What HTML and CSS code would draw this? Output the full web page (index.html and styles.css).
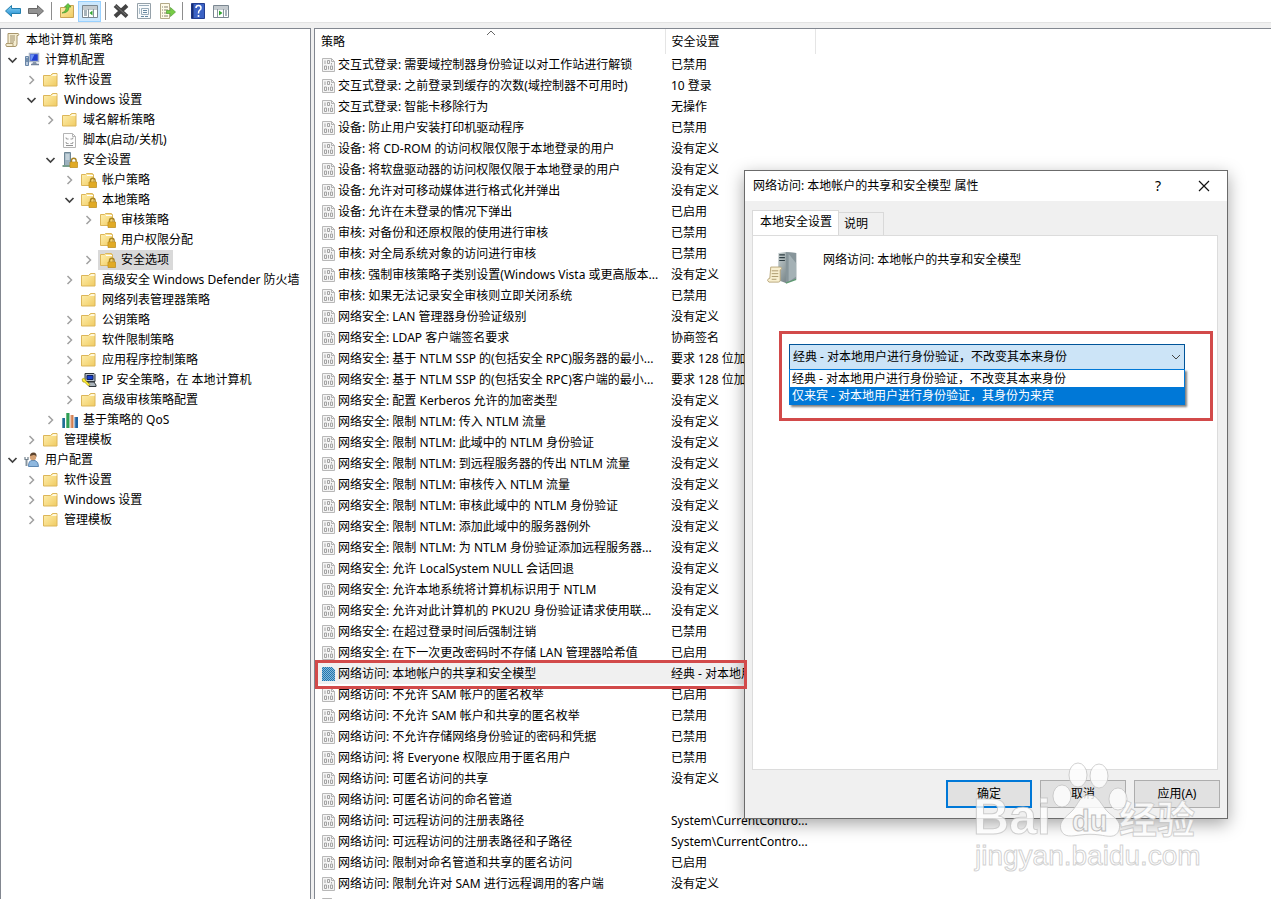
FILE: index.html
```html
<!DOCTYPE html>
<html lang="zh-CN">
<head>
<meta charset="utf-8">
<title>本地组策略编辑器</title>
<link rel="stylesheet" href="styles.css">
</head>
<body>
<svg class="defs" aria-hidden="true">
  <defs>
    <linearGradient id="gold" x1="0" y1="0" x2="1" y2="1"><stop offset="0" stop-color="#fff0b0"/><stop offset="1" stop-color="#f0cb62"/></linearGradient>
    <linearGradient id="blue" x1="0" y1="0" x2="0" y2="1"><stop offset="0" stop-color="#8ed4f5"/><stop offset="1" stop-color="#1a8ad0"/></linearGradient>
    <linearGradient id="steel" x1="0" y1="0" x2="1" y2="1"><stop offset="0" stop-color="#c9d2d2"/><stop offset="1" stop-color="#56656a"/></linearGradient>
    <pattern id="dots" width="2" height="2" patternUnits="userSpaceOnUse"><path d="M0 0h1v1h1v1H1V1H0z" fill="#2076b0"/></pattern>
    <symbol id="open" viewBox="0 0 16 16"><path d="M4.500 6l4 4 4-4" fill="none" stroke="#404040" stroke-width="1.700"/></symbol>
    <symbol id="closed" viewBox="0 0 16 16"><path d="M6.500 4l4 4-4 4" fill="none" stroke="#a0a0a0" stroke-width="1.500"/></symbol>
    <symbol id="folder" viewBox="0 0 16 16"><path d="M.5 3.500h7l2-2h4.500v12.500H.500z" fill="url(#gold)" stroke="#dcb65a"/><path d="M8.500 3.500h5M10 2.500h3.500" stroke="#fff8dc"/></symbol>
    <symbol id="lock" viewBox="0 0 16 16"><path d="M9.500 10V8.500a2.300 2.300 0 0 1 4.600 0V10" fill="none" stroke="#a98524" stroke-width="1.400"/><path d="M8 10h7.500v5.500H8z" fill="#edb52a" stroke="#b88616" stroke-width=".7"/><path d="M8.500 12h6.500M8.500 14h6.500" stroke="#c6911b" stroke-width=".6"/></symbol>
    <symbol id="folderlock" viewBox="0 0 16 16"><path d="M.5 2.500h4l1-1h6v1h1v11H.5z" fill="url(#gold)" stroke="#dcb65a"/><path d="M6 3.500h6" stroke="#fff"/><use href="#lock" width="16" height="16"/></symbol>
    <symbol id="scroll" viewBox="0 0 16 16"><path d="M3 1.500h10c1 0 1 2 0 2h-1v8.500q0 2.500-2 2.500H1.500q-1.500-2 0-3H3z" fill="#f5edd0" stroke="#a8966c"/><path d="M5 4h5M5 6h5M5 8h5M5 10h4" stroke="#968662" stroke-width=".9"/><path d="M1 11.500h7v3" fill="none" stroke="#b09e73"/></symbol>
    <symbol id="computer" viewBox="0 0 16 16"><path d="M5.500 1.500h9v8h-9z" fill="#1f3ed0" stroke="#a9b5c7" stroke-width="1.500"/><path d="M6.500 2.500h4l-3 6h-1z" fill="#6b91f4"/><path d="M9 10h3l1 2.500H8z" fill="#8998ad"/><path d="M7 12.500h8" stroke="#73839b" stroke-width="1.500"/><path d="M1.500 4.500h3v9h-3z" fill="#b8c8dc" stroke="#6986a8"/><path d="M2 7h2M2 9h2" stroke="#315880"/></symbol>
    <symbol id="script" viewBox="0 0 16 16"><path d="M1.500 1.500h9l3 3v11h-12z" fill="#fdfdfd" stroke="#b4b4b4"/><path d="M10.500 1.500v3h3" fill="none" stroke="#b4b4b4"/><path d="M4 5.500q0 2 1.500 1.500h1M11 5.500q0 2-1.500 1.500h-1M4 10q0 2 1.500 1.500h1M11 10q0 2-1.500 1.500h-1M4 13.500h7" stroke="#858585" stroke-width=".9" fill="none"/></symbol>
    <symbol id="serverlock" viewBox="0 0 16 16"><path d="M2.500.5h6v13h-6z" fill="#9cb1be" stroke="#6f8795"/><path d="M3.500 3h4M3.500 5h4M3.500 7h4" stroke="#e9f1f5"/><path d="M.5 14h8" stroke="#779d8c" stroke-width="2"/><use href="#lock" width="16" height="16"/></symbol>
    <symbol id="ipsec" viewBox="0 0 16 16"><path d="M4 1.500h9l1 1v7H4z" fill="#b5bec7" stroke="#30363b"/><path d="M6 3.500h6v4H6z" fill="#1440d0" stroke="#102060"/><path d="M7 10h6l2 3v1.500H8z" fill="#aab3bb" stroke="#30363b"/><path d="M1 7.500a2 2 0 0 1 3-.5l1 2 4 3.500-1.500 1.500L3.500 10H2z" fill="#ffef35" stroke="#9c8b10" stroke-width=".7"/></symbol>
    <symbol id="bars" viewBox="0 0 16 16"><path d="M0 6h3v10H0z" fill="#1f6f96"/><path d="M4 1h3.500v15H4z" fill="#2f9f54"/><path d="M8.500 3h3v13h-3z" fill="#d37f50"/><path d="M12.500 5H16v11h-3.500z" fill="#1e63a2"/><path d="M.5 6v10M4.500 1v15M9 3v13M13 5v11" stroke="#fff" opacity=".3"/></symbol>
    <symbol id="user" viewBox="0 0 16 16"><path d="M4.500 14.500q0-6 3.500-6h3q3.500 1 3.500 6z" fill="#8fb8df" stroke="#5d87b2"/><circle cx="9" cy="5" r="3.200" fill="#d5a274"/><path d="M6 4q0-3.500 3.500-3.500T12.500 5q-1-2.500-3-2z" fill="#5c432d"/><path d="M2.500 7v7" stroke="#87949f" stroke-width="2"/><path d="M1 5v2.500h3V5" fill="none" stroke="#71808c" stroke-width="1.200"/></symbol>
    <symbol id="binary" viewBox="0 0 14 16"><path d="M.5 1.500h9l3 3v10H.5z" fill="#f4f4f4" stroke="#b8b8b8"/><path d="M9.500 1.500v3h3" fill="none" stroke="#b2b2b2"/><path d="M3 3.500v3.500M5.500 3.500h2v3h-2zM2.500 9h2v3.500h-2zM6.500 9v3.500M8.500 9h2v3.500h-2zM9.500 6v1.500" fill="none" stroke="#9b9b9b" stroke-width=".9"/></symbol>
    <symbol id="binarysel" viewBox="0 0 14 16"><path d="M0 1h10l3 3v11H0z" fill="#86b9d8"/><path d="M0 1h10l3 3v11H0z" fill="url(#dots)"/></symbol>
  </defs>
</svg>

<div class="app">
  <nav class="toolbar" aria-label="工具栏">
    <button aria-label="后退"><svg viewBox="0 0 18 18"><path d="M1.500 9l6-5.500v3h9v5h-9v3z" fill="url(#blue)" stroke="#247fae"/></svg></button>
    <button aria-label="前进"><svg viewBox="0 0 18 18"><path d="M16.500 9l-6-5.500v3h-9v5h9v3z" fill="#929292" stroke="#676767"/></svg></button>
    <span class="sep"></span>
    <button aria-label="向上"><svg viewBox="0 0 18 18"><path d="M2.500 5.500h5l2-2h6v12h-13z" fill="url(#gold)" stroke="#c9a455"/><path d="M4 11q4-1 4.500-6H6.500L10 1.500 13 5h-2q0 6-7 6z" fill="#63c73d" stroke="#48952f" stroke-width=".7"/></svg></button>
    <button class="on" aria-label="显示控制台树"><svg viewBox="0 0 18 18"><path d="M1.500 3.500h15v12h-15z" fill="#fff" stroke="#7b8791"/><path d="M2 5h14M1.500 7h15M7.500 7v8M12.500 7v8" stroke="#8a969f"/><path d="M3 9h3M3 11h3M3 13h3" stroke="#526b7b"/><path d="M11.500 8.500v5l-3-2.500z" fill="#34a634"/></svg></button>
    <span class="sep"></span>
    <button aria-label="删除"><svg viewBox="0 0 18 18"><path d="M3 3.500l12 11M15 3.500l-12 11" stroke="#444" stroke-width="4"/><path d="M3 3l11 10" stroke="#777"/></svg></button>
    <button aria-label="属性"><svg viewBox="0 0 18 18"><path d="M2.500 1.500h13v15h-13z" fill="#f9fbfc" stroke="#95a1a9"/><path d="M4 3.500h10M6.500 6.500h7v6h-7z" fill="none" stroke="#9badba"/><path d="M4 7h1M4 9h1M4 11h1M8 8.500h4M8 10.500h4M6 14.500h3M10 14.500h3" stroke="#6788a0"/></svg></button>
    <button aria-label="导出列表"><svg viewBox="0 0 18 18"><path d="M2.500 1.500h9v15h-9z" fill="#fffbe8" stroke="#b4aa88"/><path d="M4 5h1M4 8h1M4 11h1M4 14h1M6 5h4M6 8h4M6 11h4M6 14h4" stroke="#86816f"/><path d="M8.500 8.500h4v-3l5 4.500-5 4.500v-3h-4z" fill="#76cc45" stroke="#539d34" stroke-width=".7"/></svg></button>
    <span class="sep"></span>
    <button aria-label="帮助"><svg viewBox="0 0 18 18"><path d="M2.500 1.500h13v15h-13z" fill="#3b62c4" stroke="#233e91"/><path d="M3.500 2v14" stroke="#182d72" stroke-width="2"/><path d="M7 6q0-2.500 2.500-2.500T12 6q0 1.500-1.300 2.200T9.500 11.500" fill="none" stroke="#fff" stroke-width="1.500"/><circle cx="9.500" cy="14" r="1" fill="#fff"/></svg></button>
    <button aria-label="显示操作窗格"><svg viewBox="0 0 18 18"><path d="M1.500 3.500h15v12h-15z" fill="#fff" stroke="#7b8791"/><path d="M2 5h14M1.500 7h15M5.500 7v8M11.500 7v8" stroke="#8a969f"/><path d="M13 9h2M13 11h2M13 13h2" stroke="#526b7b"/><path d="M7 8.500v5l3.500-2.500z" fill="#34a634"/></svg></button>
  </nav>

  <div class="panes">
    <aside class="tree">
      <div class="node root"><svg class="ico"><use href="#scroll"/></svg><span>本地计算机 策略</span></div>
      <ul>
        <li><div class="node"><svg class="tw"><use href="#open"/></svg><svg class="ico"><use href="#computer"/></svg><span>计算机配置</span></div>
          <ul>
            <li><div class="node"><svg class="tw"><use href="#closed"/></svg><svg class="ico"><use href="#folder"/></svg><span>软件设置</span></div></li>
            <li><div class="node"><svg class="tw"><use href="#open"/></svg><svg class="ico"><use href="#folder"/></svg><span>Windows 设置</span></div>
              <ul>
                <li><div class="node"><svg class="tw"><use href="#closed"/></svg><svg class="ico"><use href="#folder"/></svg><span>域名解析策略</span></div></li>
                <li><div class="node"><i class="tw"></i><svg class="ico"><use href="#script"/></svg><span>脚本(启动/关机)</span></div></li>
                <li><div class="node"><svg class="tw"><use href="#open"/></svg><svg class="ico"><use href="#serverlock"/></svg><span>安全设置</span></div>
                  <ul>
                    <li><div class="node"><svg class="tw"><use href="#closed"/></svg><svg class="ico"><use href="#folderlock"/></svg><span>帐户策略</span></div></li>
                    <li><div class="node"><svg class="tw"><use href="#open"/></svg><svg class="ico"><use href="#folderlock"/></svg><span>本地策略</span></div>
                      <ul>
                        <li><div class="node"><svg class="tw"><use href="#closed"/></svg><svg class="ico"><use href="#folderlock"/></svg><span>审核策略</span></div></li>
                        <li><div class="node"><i class="tw"></i><svg class="ico"><use href="#folderlock"/></svg><span>用户权限分配</span></div></li>
                        <li><div class="node current"><svg class="tw"><use href="#closed"/></svg><svg class="ico"><use href="#folderlock"/></svg><span>安全选项</span></div></li>
                      </ul>
                    </li>
                    <li><div class="node"><svg class="tw"><use href="#closed"/></svg><svg class="ico"><use href="#folder"/></svg><span>高级安全 Windows Defender 防火墙</span></div></li>
                    <li><div class="node"><i class="tw"></i><svg class="ico"><use href="#folder"/></svg><span>网络列表管理器策略</span></div></li>
                    <li><div class="node"><svg class="tw"><use href="#closed"/></svg><svg class="ico"><use href="#folder"/></svg><span>公钥策略</span></div></li>
                    <li><div class="node"><svg class="tw"><use href="#closed"/></svg><svg class="ico"><use href="#folder"/></svg><span>软件限制策略</span></div></li>
                    <li><div class="node"><svg class="tw"><use href="#closed"/></svg><svg class="ico"><use href="#folder"/></svg><span>应用程序控制策略</span></div></li>
                    <li><div class="node"><svg class="tw"><use href="#closed"/></svg><svg class="ico"><use href="#ipsec"/></svg><span>IP 安全策略，在 本地计算机</span></div></li>
                    <li><div class="node"><svg class="tw"><use href="#closed"/></svg><svg class="ico"><use href="#folder"/></svg><span>高级审核策略配置</span></div></li>
                  </ul>
                </li>
                <li><div class="node"><svg class="tw"><use href="#closed"/></svg><svg class="ico"><use href="#bars"/></svg><span>基于策略的 QoS</span></div></li>
              </ul>
            </li>
            <li><div class="node"><svg class="tw"><use href="#closed"/></svg><svg class="ico"><use href="#folder"/></svg><span>管理模板</span></div></li>
          </ul>
        </li>
        <li><div class="node"><svg class="tw"><use href="#open"/></svg><svg class="ico"><use href="#user"/></svg><span>用户配置</span></div>
          <ul>
            <li><div class="node"><svg class="tw"><use href="#closed"/></svg><svg class="ico"><use href="#folder"/></svg><span>软件设置</span></div></li>
            <li><div class="node"><svg class="tw"><use href="#closed"/></svg><svg class="ico"><use href="#folder"/></svg><span>Windows 设置</span></div></li>
            <li><div class="node"><svg class="tw"><use href="#closed"/></svg><svg class="ico"><use href="#folder"/></svg><span>管理模板</span></div></li>
          </ul>
        </li>
      </ul>
    </aside>

    <main class="list">
      <table>
        <colgroup><col class="c1"><col class="c2"><col></colgroup>
        <thead><tr><th>策略<svg class="sort" viewBox="0 0 10 6"><path d="M1 5l4-4 4 4" fill="none" stroke="#666"/></svg></th><th>安全设置</th><th class="rest"></th></tr></thead>
        <tbody>
          <tr><td><svg><use href="#binary"/></svg>交互式登录: 需要域控制器身份验证以对工作站进行解锁</td><td>已禁用</td></tr>
          <tr><td><svg><use href="#binary"/></svg>交互式登录: 之前登录到缓存的次数(域控制器不可用时)</td><td>10 登录</td></tr>
          <tr><td><svg><use href="#binary"/></svg>交互式登录: 智能卡移除行为</td><td>无操作</td></tr>
          <tr><td><svg><use href="#binary"/></svg>设备: 防止用户安装打印机驱动程序</td><td>已禁用</td></tr>
          <tr><td><svg><use href="#binary"/></svg>设备: 将 CD-ROM 的访问权限仅限于本地登录的用户</td><td>没有定义</td></tr>
          <tr><td><svg><use href="#binary"/></svg>设备: 将软盘驱动器的访问权限仅限于本地登录的用户</td><td>没有定义</td></tr>
          <tr><td><svg><use href="#binary"/></svg>设备: 允许对可移动媒体进行格式化并弹出</td><td>没有定义</td></tr>
          <tr><td><svg><use href="#binary"/></svg>设备: 允许在未登录的情况下弹出</td><td>已启用</td></tr>
          <tr><td><svg><use href="#binary"/></svg>审核: 对备份和还原权限的使用进行审核</td><td>已禁用</td></tr>
          <tr><td><svg><use href="#binary"/></svg>审核: 对全局系统对象的访问进行审核</td><td>已禁用</td></tr>
          <tr><td><svg><use href="#binary"/></svg>审核: 强制审核策略子类别设置(Windows Vista 或更高版本...</td><td>没有定义</td></tr>
          <tr><td><svg><use href="#binary"/></svg>审核: 如果无法记录安全审核则立即关闭系统</td><td>已禁用</td></tr>
          <tr><td><svg><use href="#binary"/></svg>网络安全: LAN 管理器身份验证级别</td><td>没有定义</td></tr>
          <tr><td><svg><use href="#binary"/></svg>网络安全: LDAP 客户端签名要求</td><td>协商签名</td></tr>
          <tr><td><svg><use href="#binary"/></svg>网络安全: 基于 NTLM SSP 的(包括安全 RPC)服务器的最小...</td><td>要求 128 位加密</td></tr>
          <tr><td><svg><use href="#binary"/></svg>网络安全: 基于 NTLM SSP 的(包括安全 RPC)客户端的最小...</td><td>要求 128 位加密</td></tr>
          <tr><td><svg><use href="#binary"/></svg>网络安全: 配置 Kerberos 允许的加密类型</td><td>没有定义</td></tr>
          <tr><td><svg><use href="#binary"/></svg>网络安全: 限制 NTLM: 传入 NTLM 流量</td><td>没有定义</td></tr>
          <tr><td><svg><use href="#binary"/></svg>网络安全: 限制 NTLM: 此域中的 NTLM 身份验证</td><td>没有定义</td></tr>
          <tr><td><svg><use href="#binary"/></svg>网络安全: 限制 NTLM: 到远程服务器的传出 NTLM 流量</td><td>没有定义</td></tr>
          <tr><td><svg><use href="#binary"/></svg>网络安全: 限制 NTLM: 审核传入 NTLM 流量</td><td>没有定义</td></tr>
          <tr><td><svg><use href="#binary"/></svg>网络安全: 限制 NTLM: 审核此域中的 NTLM 身份验证</td><td>没有定义</td></tr>
          <tr><td><svg><use href="#binary"/></svg>网络安全: 限制 NTLM: 添加此域中的服务器例外</td><td>没有定义</td></tr>
          <tr><td><svg><use href="#binary"/></svg>网络安全: 限制 NTLM: 为 NTLM 身份验证添加远程服务器...</td><td>没有定义</td></tr>
          <tr><td><svg><use href="#binary"/></svg>网络安全: 允许 LocalSystem NULL 会话回退</td><td>没有定义</td></tr>
          <tr><td><svg><use href="#binary"/></svg>网络安全: 允许本地系统将计算机标识用于 NTLM</td><td>没有定义</td></tr>
          <tr><td><svg><use href="#binary"/></svg>网络安全: 允许对此计算机的 PKU2U 身份验证请求使用联...</td><td>没有定义</td></tr>
          <tr><td><svg><use href="#binary"/></svg>网络安全: 在超过登录时间后强制注销</td><td>已禁用</td></tr>
          <tr><td><svg><use href="#binary"/></svg>网络安全: 在下一次更改密码时不存储 LAN 管理器哈希值</td><td>已启用</td></tr>
          <tr class="picked"><td><svg><use href="#binarysel"/></svg>网络访问: 本地帐户的共享和安全模型</td><td>经典 - 对本地用户...</td></tr>
          <tr><td><svg><use href="#binary"/></svg>网络访问: 不允许 SAM 帐户的匿名枚举</td><td>已启用</td></tr>
          <tr><td><svg><use href="#binary"/></svg>网络访问: 不允许 SAM 帐户和共享的匿名枚举</td><td>已禁用</td></tr>
          <tr><td><svg><use href="#binary"/></svg>网络访问: 不允许存储网络身份验证的密码和凭据</td><td>已禁用</td></tr>
          <tr><td><svg><use href="#binary"/></svg>网络访问: 将 Everyone 权限应用于匿名用户</td><td>已禁用</td></tr>
          <tr><td><svg><use href="#binary"/></svg>网络访问: 可匿名访问的共享</td><td>没有定义</td></tr>
          <tr><td><svg><use href="#binary"/></svg>网络访问: 可匿名访问的命名管道</td><td></td></tr>
          <tr><td><svg><use href="#binary"/></svg>网络访问: 可远程访问的注册表路径</td><td>System\CurrentContro...</td></tr>
          <tr><td><svg><use href="#binary"/></svg>网络访问: 可远程访问的注册表路径和子路径</td><td>System\CurrentContro...</td></tr>
          <tr><td><svg><use href="#binary"/></svg>网络访问: 限制对命名管道和共享的匿名访问</td><td>已启用</td></tr>
          <tr><td><svg><use href="#binary"/></svg>网络访问: 限制允许对 SAM 进行远程调用的客户端</td><td>没有定义</td></tr>
          <tr><td><svg><use href="#binary"/></svg></td><td></td></tr>
        </tbody>
      </table>
    </main>
  </div>

  <section class="dialog" role="dialog" aria-labelledby="dlg-title">
    <header class="titlebar">
      <h1 id="dlg-title">网络访问: 本地帐户的共享和安全模型 属性</h1>
      <button aria-label="帮助">?</button>
      <button aria-label="关闭"><svg width="12" height="12" viewBox="0 0 12 12"><path d="M1 1l10 10M11 1L1 11" stroke="#111" stroke-width="1.200"/></svg></button>
    </header>
    <div class="body">
      <div class="tabs" role="tablist">
        <button role="tab" class="tab active" aria-selected="true">本地安全设置</button>
        <button role="tab" class="tab" aria-selected="false">说明</button>
      </div>
      <div class="sheet">
        <div class="caption">
          <svg class="server" viewBox="0 0 34 36"><path d="M12 2l8-1 11 1v28l-11 4-8-3z" fill="url(#steel)"/><path d="M20 1l11 1v28l-11 4z" fill="#87959a"/><path d="M23 3l8 10v14l-8 6z" fill="#b8c5c8" opacity=".6"/><path d="M13 4h6M13 7h6M13 10h6" stroke="#2d3c42" stroke-width="1.200"/><path d="M20 34l11-4" stroke="#5e9a71" stroke-width="1.500"/><path d="M4 17h10c2 0 2 3 0 3v11q0 2-2 2H2q-3-2 0-4h1z" fill="#f8efd0" stroke="#b7a57a"/><path d="M5 21h7M5 24h7M5 27h7M5 30h5" stroke="#aa986c"/></svg>
          <label for="model">网络访问: 本地帐户的共享和安全模型</label>
        </div>
        <div class="frame">
          <div class="combo">
            <select id="model"><option>经典 - 对本地用户进行身份验证，不改变其本来身份</option><option>仅来宾 - 对本地用户进行身份验证，其身份为来宾</option></select>
            <svg class="arrow" viewBox="0 0 10 6"><path d="M1 1l4 4 4-4" fill="none" stroke="#444"/></svg>
            <ul class="menu" role="listbox">
              <li role="option">经典 - 对本地用户进行身份验证，不改变其本来身份</li>
              <li role="option" class="hot" aria-selected="true">仅来宾 - 对本地用户进行身份验证，其身份为来宾</li>
            </ul>
          </div>
        </div>
      </div>
      <footer class="actions">
        <button class="primary">确定</button>
        <button>取消</button>
        <button>应用(A)</button>
      </footer>
    </div>
  </section>

  <div class="mark"></div>

  <svg class="brand" viewBox="0 0 240 116">
    <g class="ink">
      <text x="3" y="74" class="big">Bai</text>
      <ellipse cx="92" cy="36" rx="9" ry="11"/><ellipse cx="108" cy="15" rx="9" ry="12"/><ellipse cx="129" cy="16" rx="9" ry="12"/><ellipse cx="148" cy="39" rx="9" ry="11"/>
      <path d="M119 35c10 0 12 11 20 18 9 7 12 10 10 17-3 9-12 6-19 5-7-1-13-1-20 0-8 1-16 3-19-5-2-7 2-11 9-17 9-8 9-18 19-18z"/>
      <text x="149" y="73" class="cn">经验</text>
      <text x="5" y="105" class="url">jingyan.baidu.com</text>
    </g>
    <text x="102" y="71" class="du">du</text>
  </svg>
</div>
</body>
</html>
```
FILE: styles.css
```css
* { box-sizing: border-box; }
body {
  margin: 0;
  font: 12px/20px "Noto Sans", "Noto Sans CJK SC", sans-serif;
  color: #000;
  background: #fff;
}
button { font: inherit; color: inherit; border: 0; padding: 0; background: none; }
ul { list-style: none; margin: 0; padding: 0; }
.defs { position: absolute; width: 0; height: 0; }
.app { position: relative; display: flex; flex-direction: column; height: 100vh; overflow: hidden; }

.toolbar { display: flex; align-items: center; height: 22px; padding-left: 1px; flex: none; }
.toolbar button { display: grid; place-items: center; width: 23px; height: 21px; }
.toolbar svg { width: 18px; height: 18px; }
.toolbar .on { background: #cce8ff; border: 1px solid #99d1ff; }
.sep { width: 8px; height: 18px; background: linear-gradient(#8d8d8d, #8d8d8d) center / 1px 100% no-repeat; }

.panes { display: flex; flex: 1; min-height: 0; gap: 3px; padding-top: 5px; background: #f0f0f0; border-top: 1px solid #e3e3e3; }
.tree { flex: 0 0 311px; background: #fff; border: 1px solid #828790; border-bottom: 0; padding-top: 1px; overflow: hidden; }
.tree ul ul { padding-left: 19px; }
.node { display: flex; align-items: center; height: 20px; padding-left: 3px; white-space: nowrap; }
.node.root { padding-left: 4px; }
.tw { flex: none; width: 16px; height: 16px; margin-right: 4px; }
.ico { flex: none; width: 16px; height: 16px; }
.node span { padding: 0 4px 0 5px; }
.current .ico { background: #d9d9d9; box-shadow: 0 0 0 2px #d9d9d9; }
.current span { background: #d9d9d9; }

.list { flex: 1; min-width: 0; background: #fff; border: 1px solid #828790; border-width: 1px 0 0 1px; overflow: hidden; }
table { width: 100%; table-layout: fixed; border-collapse: collapse; }
.c1 { width: 350px; }
.c2 { width: 150px; }
th { position: relative; height: 25px; padding: 0 6px; font-weight: 400; text-align: left; border-right: 1px solid #e5e5e5; }
th.rest { border: 0; }
.sort { position: absolute; top: 1px; left: 49%; width: 10px; height: 6px; }
td { height: 21px; padding: 0 0 0 6px; white-space: nowrap; overflow: hidden; line-height: 20px; }
td:first-child { padding-left: 7px; }
td svg { width: 14px; height: 16px; margin-right: 2px; vertical-align: middle; }
.picked { background: #f0f0f0; }

.dialog { position: absolute; top: 170px; right: 43px; width: 484px; background: #f0f0f0; border: 1px solid #6b6b6b; box-shadow: 0 5px 16px rgba(0, 0, 0, .35); }
.titlebar { display: flex; align-items: center; height: 30px; padding-left: 8px; background: #fff; }
.titlebar h1 { flex: 1; margin: 0; font-size: 12px; font-weight: 400; }
.titlebar button { display: grid; place-items: center; width: 46px; height: 30px; font-size: 14px; }
.body { padding: 9px 7px 10px; }
.tabs { display: flex; align-items: flex-end; height: 25px; }
.tab { height: 23px; padding: 0 15px 0 5px; border: 1px solid #d9d9d9; border-width: 1px 1px 0 0; }
.tab.active { height: 25px; padding: 0 6px 2px 7px; background: #fff; border-width: 1px 1px 0 1px; }
.sheet { min-height: 535px; margin-right: 2px; padding: 14px 4px; background: #fff; border: 1px solid #dcdcdc; }
.caption { display: flex; gap: 24px; padding-left: 10px; line-height: 20px; }
.server { width: 32px; height: 36px; }
.frame { margin: 45px 0 0 22px; padding: 10px 25px 48px 7px; border: 3px solid #d24a4a; }
.combo { position: relative; }
.combo select { appearance: none; display: block; width: 100%; height: 26px; margin: 0; padding: 0 3px; font: inherit; color: #000; background: #cce4f7; border: 1px solid #005499; border-radius: 0; }
.arrow { position: absolute; top: 10px; right: 4px; width: 10px; height: 6px; }
.menu { position: absolute; top: 25px; left: 0; right: 0; background: #fff; border: 1px solid #0078d7; box-shadow: 2px 2px 2px rgba(0, 0, 0, .5); line-height: 17px; }
.menu li { padding-left: 2px; }
.menu .hot { color: #fff; background: #0078d7; }
.actions { display: flex; justify-content: flex-end; gap: 8px; padding-top: 10px; }
.actions button { width: 86px; height: 28px; background: #e1e1e1; border: 1px solid #adadad; }
.actions .primary { border: 2px solid #0078d7; }

.mark { position: absolute; top: 660px; left: 315px; width: 432px; height: 29px; border: 3px solid #d24a4a; }

.brand { position: absolute; top: 760px; right: 61px; width: 240px; height: 116px; pointer-events: none; }
.ink { fill: #fff; fill-opacity: .8; stroke: #bdbdbd; stroke-opacity: .7; stroke-width: 1; }
.brand text { font-family: "Liberation Sans", "Noto Sans CJK SC", sans-serif; font-weight: 700; }
.brand .big { font-size: 50px; }
.brand .cn { font-size: 38px; }
.brand .url { font-size: 28px; font-weight: 400; }
.brand .du { font-size: 29px; fill: #f4f4f4; stroke: #bdbdbd; }
```
